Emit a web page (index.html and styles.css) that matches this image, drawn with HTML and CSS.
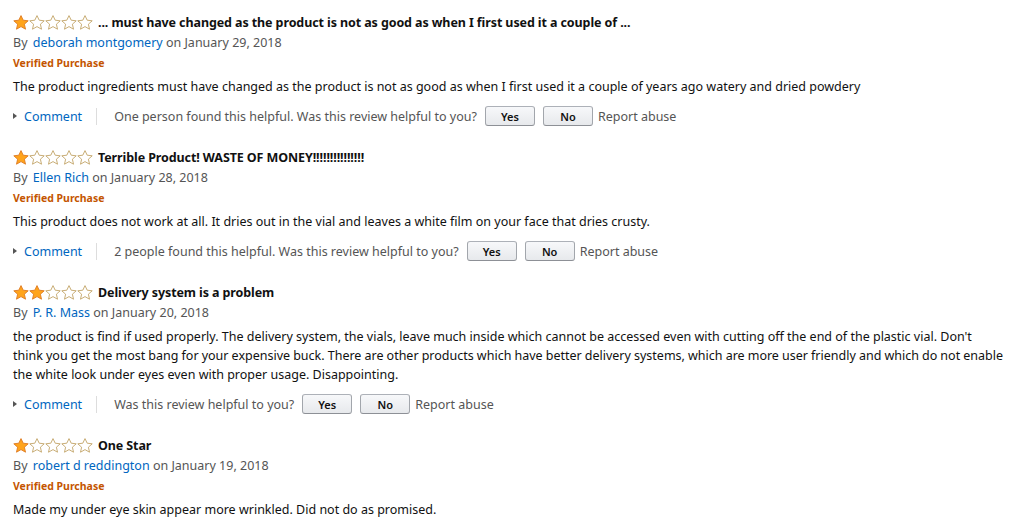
FILE: index.html
```html
<!DOCTYPE html>
<html lang="en">
<head>
<meta charset="utf-8">
<title>Reviews</title>
<link rel="stylesheet" href="styles.css">
</head>
<body>
<svg width="0" height="0" class="defs" aria-hidden="true">
  <defs>
    <symbol id="star-full" viewBox="0 0 16 15">
      <polygon points="8,0.6 10.2,5.2 15.2,5.8 11.4,9.2 12.5,14.2 8,11.6 3.5,14.2 4.6,9.2 0.8,5.8 5.8,5.2" fill="#ffa41c" stroke="#de7921" stroke-width="0.9" stroke-linejoin="round"/>
    </symbol>
    <symbol id="star-empty" viewBox="0 0 16 15">
      <polygon points="8,0.6 10.2,5.2 15.2,5.8 11.4,9.2 12.5,14.2 8,11.6 3.5,14.2 4.6,9.2 0.8,5.8 5.8,5.2" fill="#fff" stroke="#c2a467" stroke-width="0.9" stroke-linejoin="round"/>
    </symbol>
  </defs>
</svg>

<div class="reviews">
  <div class="review">
    <div class="title-row">
      <span class="stars"><svg class="star"><use href="#star-full"/></svg><svg class="star"><use href="#star-empty"/></svg><svg class="star"><use href="#star-empty"/></svg><svg class="star"><use href="#star-empty"/></svg><svg class="star"><use href="#star-empty"/></svg></span>
      <span class="title">... must have changed as the product is not as good as when I first used it a couple of ...</span>
    </div>
    <div class="byline">By <a class="author">deborah montgomery</a> on January 29, 2018</div>
    <div class="verified">Verified Purchase</div>
    <div class="body">The product ingredients must have changed as the product is not as good as when I first used it a couple of years ago watery and dried powdery</div>
    <div class="actions">
      <span class="caret"></span><a class="comment">Comment</a><span class="sep"></span>
      <span class="helpful">One person found this helpful. Was this review helpful to you?</span>
      <span class="btn btn-yes">Yes</span><span class="btn btn-no">No</span>
      <span class="report">Report abuse</span>
    </div>
  </div>

  <div class="review">
    <div class="title-row">
      <span class="stars"><svg class="star"><use href="#star-full"/></svg><svg class="star"><use href="#star-empty"/></svg><svg class="star"><use href="#star-empty"/></svg><svg class="star"><use href="#star-empty"/></svg><svg class="star"><use href="#star-empty"/></svg></span>
      <span class="title">Terrible Product! WASTE OF MONEY!!!!!!!!!!!!!!!</span>
    </div>
    <div class="byline">By <a class="author">Ellen Rich</a> on January 28, 2018</div>
    <div class="verified">Verified Purchase</div>
    <div class="body">This product does not work at all. It dries out in the vial and leaves a white film on your face that dries crusty.</div>
    <div class="actions">
      <span class="caret"></span><a class="comment">Comment</a><span class="sep"></span>
      <span class="helpful">2 people found this helpful. Was this review helpful to you?</span>
      <span class="btn btn-yes">Yes</span><span class="btn btn-no">No</span>
      <span class="report">Report abuse</span>
    </div>
  </div>

  <div class="review">
    <div class="title-row">
      <span class="stars"><svg class="star"><use href="#star-full"/></svg><svg class="star"><use href="#star-full"/></svg><svg class="star"><use href="#star-empty"/></svg><svg class="star"><use href="#star-empty"/></svg><svg class="star"><use href="#star-empty"/></svg></span>
      <span class="title">Delivery system is a problem</span>
    </div>
    <div class="byline">By <a class="author">P. R. Mass</a> on January 20, 2018</div>
    <div class="body">the product is find if used properly. The delivery system, the vials, leave much inside which cannot be accessed even with cutting off the end of the plastic vial. Don't<br><span class="tight">think you get the most bang for your expensive buck. There are other products which have better delivery systems, which are more user friendly and which do not enable</span><br>the white look under eyes even with proper usage. Disappointing.</div>
    <div class="actions">
      <span class="caret"></span><a class="comment">Comment</a><span class="sep"></span>
      <span class="helpful">Was this review helpful to you?</span>
      <span class="btn btn-yes">Yes</span><span class="btn btn-no">No</span>
      <span class="report">Report abuse</span>
    </div>
  </div>

  <div class="review">
    <div class="title-row">
      <span class="stars"><svg class="star"><use href="#star-full"/></svg><svg class="star"><use href="#star-empty"/></svg><svg class="star"><use href="#star-empty"/></svg><svg class="star"><use href="#star-empty"/></svg><svg class="star"><use href="#star-empty"/></svg></span>
      <span class="title">One Star</span>
    </div>
    <div class="byline">By <a class="author">robert d reddington</a> on January 19, 2018</div>
    <div class="verified">Verified Purchase</div>
    <div class="body">Made my under eye skin appear more wrinkled. Did not do as promised.</div>
    <div class="actions">
      <span class="caret"></span><a class="comment">Comment</a><span class="sep"></span>
      <span class="helpful">One person found this helpful. Was this review helpful to you?</span>
      <span class="btn btn-yes">Yes</span><span class="btn btn-no">No</span>
      <span class="report">Report abuse</span>
    </div>
  </div>
</div>
</body>
</html>
```
FILE: styles.css
```css
html,body{margin:0;padding:0;background:#fff;}
body{font-family:"Noto Sans","Open Sans",sans-serif;font-size:12.5px;color:#111;overflow:hidden;}
.defs{position:absolute;width:0;height:0;overflow:hidden;}
.reviews{padding:12px 4px 0 13px;display:flex;flex-direction:column;gap:20px;}
.review{display:flex;flex-direction:column;}
.title-row{display:flex;align-items:center;height:21px;}
.stars{display:flex;margin-right:5px;}
.star{width:16px;height:15px;display:block;}
.title{font-weight:700;white-space:nowrap;letter-spacing:-0.1px;}
.byline{line-height:20px;color:#555;}
.author{color:#0066c0;text-decoration:none;margin-left:2px;}
.verified{line-height:20px;color:#c45500;font-weight:700;font-size:10.5px;}
.body{margin-top:4px;line-height:19px;color:#111;}
.tight{word-spacing:-0.15px;}
.actions{margin-top:9px;height:22px;display:flex;align-items:center;color:#555;}
.caret{width:0;height:0;border-left:4px solid #555;border-top:3.5px solid transparent;border-bottom:3.5px solid transparent;margin-right:7px;}
.comment{color:#0066c0;}
.sep{width:1px;height:17px;background:#ddd;margin:0 17px 0 14px;}
.helpful{margin-right:8px;}
.btn{box-sizing:border-box;width:50px;height:20px;display:flex;align-items:center;justify-content:center;border:1px solid #adb1b8;border-color:#adb1b8 #a2a6ac #8d9096;border-radius:3px;background:linear-gradient(#f7f8fa,#e7e9ec);color:#111;font-size:11px;font-weight:600;}
.btn-yes{margin-right:8px;}
.report{margin-left:5px;color:#555;}
```
